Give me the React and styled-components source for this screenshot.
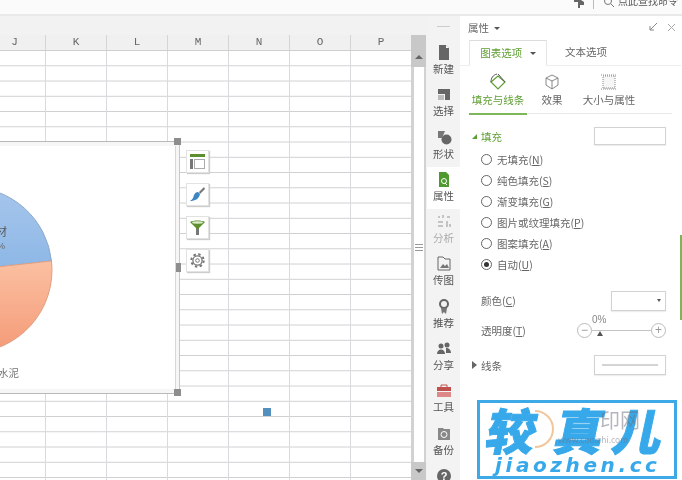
import React from "react";
import styled, { createGlobalStyle } from "styled-components";

const Global = createGlobalStyle`
  html, body { margin: 0; padding: 0; background: #fff; overflow: hidden; }
  #root { width: 682px; height: 480px; }
`;
const FONT = `"Noto Sans CJK SC", "Liberation Sans", sans-serif`;

const Page = styled.div`
  position: relative; width: 682px; height: 480px; overflow: hidden;
  display: flex; flex-direction: column; background: #fff;
  font-family: ${FONT}; color: #666; filter: blur(0.55px);
`;
const TopBar = styled.div`
  height: 14px; flex: none; background: #fbfbfb; border-bottom: 2px solid #e9e9e9;
  display: flex; justify-content: flex-end; align-items: flex-start; gap: 4px;
  padding-right: 4px; overflow: hidden; box-sizing: content-box;
`;
const Sep = styled.span`width: 1px; height: 9px; background: #bbb; margin: 0 5px 0 4px;`;
const TopIcon = styled.span`display: block; transform: translateY(-3px); height: 11px; svg { display: block; }`;
const TopText = styled.span`font-size: 10px; line-height: 12px; color: #555; white-space: nowrap; transform: translateY(-5px);`;
const Body = styled.div`flex: 1; display: flex; min-height: 0;`;

const Work = styled.div`
  width: 427px; flex: none; background: #f2f2f2; display: flex; flex-direction: column; padding-top: 19px;
`;
const SheetRow = styled.div`flex: 1; display: flex; min-height: 0;`;
const Sheet = styled.div`width: 411px; flex: none; display: flex; flex-direction: column; position: relative; background: #fff;`;
const Header = styled.div`
  height: 15px; flex: none; background: #f0f0f0; border-bottom: 1px solid #cfcfcf;
  display: flex; box-sizing: content-box;
`;
const ColHead = styled.div`
  width: ${p => p.$w}px; flex: none; box-sizing: border-box; border-right: 1px solid #d5d5d8; padding-right: ${p => p.$pr || 0}px;
  text-align: center; font: 11px/15px "Liberation Mono", "DejaVu Sans Mono", monospace; color: #666;
`;
const Cells = styled.div`
  flex: 1; background-color: #fff;
  background-image:
    linear-gradient(to right, transparent 60px, #d9d9de 60px, #d9d9de 61px),
    linear-gradient(to bottom, transparent 14.25px, #cfcfcf 14.25px, #cfcfcf 15.25px);
  background-size: 61px 100%, 100% 15.25px;
  background-position: -15px 0, 0 0;
`;
const Scroll = styled.div`
  width: 15px; flex: none; background: #d2d2d2; display: flex; flex-direction: column; align-items: stretch; position: relative;
`;
const ScrollEnd = styled.div`
  height: ${p => p.$h}px; flex: none; background: #c8c8c8; display: flex; flex-direction: column; align-items: center; justify-content: center;
`;
const Track = styled.div`flex: 1; background: #fff; margin: 0 2px 0 3px;`;
const Grip = styled.span`
  position: absolute; left: 4px; top: 209px; width: 8px; height: 7px;
  border-top: 1px solid #999; border-bottom: 1px solid #999; box-sizing: border-box;
  &::after { content: ""; display: block; height: 1px; background: #999; margin-top: 2px; }
`;
const UpArrow = styled.span`width: 0; height: 0; border: 4px solid transparent; border-bottom: 4px solid #666; border-top: 0; margin-top: 12px;`;
const DownArrow = styled.span`width: 0; height: 0; border: 4px solid transparent; border-top: 4px solid #666; border-bottom: 0;`;

const Frame = styled.div`
  position: absolute; left: -6px; top: 106px; width: 186px; height: 253px; box-sizing: border-box;
  background: #f6f6f6; border-style: solid; border-color: #b8b8b8 #c8c8cc #b8b8b8 transparent; border-width: 1px 1px 1px 0;
`;
const ChartArea = styled.div`
  position: absolute; left: 0; top: 4px; width: 181px; height: 243px; background: #fff; border-right: 1px solid #d8d8dc;
  svg { display: block; }
`;
const Handle = styled.span`
  position: absolute; left: 174px; top: ${p => p.$t}px; width: ${p => p.$narrow ? 5 : 7}px; height: ${p => p.$narrow ? 9 : 7}px;
  margin-left: ${p => p.$narrow ? 2 : 0}px; background: #8d8d8d;
`;
const Tools = styled.div`position: absolute; left: 186px; top: 115px; display: flex; flex-direction: column; gap: 10px;`;
const ToolBtn = styled.div`
  width: 23px; height: 23px; box-sizing: border-box; background: #fff; border: 1px solid #e2e2e2;
  box-shadow: 1px 1px 1px #ccc; display: flex; align-items: center; justify-content: center;
`;
const Marker = styled.span`position: absolute; left: 263px; top: 373px; width: 8px; height: 8px; background: #5390bd;`;

const Rail = styled.div`
  width: 33px; flex: none; background: #f3f3f3; display: flex; flex-direction: column; align-items: center; padding-top: 24px;
  position: relative;
`;
const RailGrip = styled.span`position: absolute; top: 10px; left: 10px; width: 13px; height: 1px; background: #ccc;`;
const RailItem = styled.div`
  width: 100%; height: 42.3px; flex: none; display: flex; flex-direction: column; align-items: center; justify-content: flex-start;
  background: ${p => p.$active ? "#fff" : "transparent"}; color: ${p => p.$dim ? "#aaa" : "#555"};
  font-size: 10.5px; line-height: 13px; padding-top: 4px; box-sizing: border-box; gap: 1px;
  svg { display: block; height: 17px; }
`;

const Panel = styled.div`width: 222px; flex: none; background: #fff; position: relative; display: flex; flex-direction: column; padding-top: 2px; box-sizing: border-box; border-right: 1px solid #fff;`;
const GreenEdge = styled.span`position: absolute; right: -1px; top: 219px; height: 85px; width: 2px; background: #7cb45a;`;
const PanelHead = styled.div`
  height: 18px; display: flex; align-items: center; justify-content: space-between; padding: 0 5px 0 8px; font-size: 10.5px; flex: none;
`;
const Caret = styled.i`display: inline-block; border: 3px solid transparent; border-top: 3px solid #555; border-bottom: 0; margin-left: 5px; vertical-align: 2px;`;
const HeadIcons = styled.div`display: flex; gap: 9px; align-items: center;`;
const Tabs = styled.div`height: 25px; flex: none; display: flex; padding-left: 9px; border-bottom: 1px solid #eee; margin-top: 4px; box-sizing: content-box;`;
const Tab = styled.div`
  width: ${p => p.$w}px; box-sizing: border-box; text-align: center; font-size: 10.5px; line-height: 24px;
  color: ${p => p.$active ? "#5d9e32" : "#666"};
  ${p => p.$active ? "border: 1px solid #e6e6e6; border-bottom: 1px solid #fff; height: 26px; border-top-color: #dcdcdc;" : ""}
`;
const SubTabs = styled.div`display: flex; height: 47px; flex: none; margin: 0 9px; border-bottom: 1px solid #e8e8e8; box-sizing: content-box;`;
const SubTab = styled.div`
  width: ${p => p.$w}px; flex: none; display: flex; flex-direction: column; align-items: center; padding-top: 6px; gap: 1px;
  font-size: 10.5px; line-height: 14px; color: ${p => p.$active ? "#5d9e32" : "#666"}; box-sizing: border-box; height: 49px;
  ${p => p.$active ? "border-bottom: 2px solid #7fb55c;" : ""}
  svg { display: block; height: 20px; }
`;
const Rows = styled.div`display: flex; flex-direction: column; padding: 0 15px 0 12px; flex: 1;`;
const SectionRow = styled.div`
  display: flex; align-items: center; justify-content: space-between; height: ${p => p.$h}px; margin-top: ${p => p.$mt || 0}px; flex: none;
`;
const SectionLabel = styled.div`display: flex; align-items: center; font-size: 10.5px; color: ${p => p.$green ? "#5d9e32" : "#666"}; gap: 4px;`;
const TriDown = styled.i`width: 0; height: 0; border-left: 5px solid transparent; border-bottom: 5px solid #5d9e32;`;
const TriRight = styled.i`width: 0; height: 0; border: 4px solid transparent; border-left: 5px solid #666; border-right: 0;`;
const BoxField = styled.div`
  width: ${p => p.$w}px; height: ${p => p.$h}px; box-sizing: border-box; border: 1px solid #d2d2d2; box-shadow: 0 1px 1px #eee;
  display: flex; align-items: center; justify-content: ${p => p.$end ? "flex-end" : "center"}; padding: 0 4px; background: #fff;
`;
const LineSample = styled.span`height: 2px; flex: 1; margin: 0 3px; background: #d4d4d4;`;
const MiniCaret = styled.i`border: 2px solid transparent; border-top: 3px solid #555; border-bottom: 0;`;
const RadioRow = styled.div`display: flex; align-items: center; height: 21px; padding-left: 9px; gap: 5px; font-size: 10.5px; color: #666; flex: none;`;
const RadioDot = styled.span`
  width: 11px; height: 11px; box-sizing: border-box; border: 1px solid #666; border-radius: 50%; flex: none; display: flex; align-items: center; justify-content: center;
  &::after { content: ""; width: 5px; height: 5px; border-radius: 50%; background: ${p => p.$on ? "#333" : "transparent"}; }
`;
const U = styled.span`text-decoration: underline;`;
const Spacer = styled.div`height: 4px; flex: none;`;
const FormLabel = styled.div`font-size: 10.5px; color: #666; padding-left: 9px;`;
const Slider = styled.div`position: relative; width: 89px; height: 16px; display: flex; align-items: center; justify-content: space-between;`;
const RoundBtn = styled.span`
  width: 15px; height: 15px; box-sizing: border-box; border: 1px solid #bbb; border-radius: 50%; color: #999; background: #fff; z-index: 1;
  display: flex; align-items: center; justify-content: center; font: 12px/12px "Liberation Sans", sans-serif;
`;
const SliderLine = styled.span`position: absolute; left: 14px; right: 14px; top: 8px; height: 1px; background: #c4c4c4;`;
const SliderVal = styled.span`position: absolute; left: 15px; top: -8px; font-size: 10px; line-height: 12px; color: #888; font-family: "Liberation Sans", sans-serif; background: #fff;`;
const SliderThumb = styled.span`position: absolute; left: 20px; top: 9px; border: 3px solid transparent; border-bottom: 5px solid #555; border-top: 0;`;

const Logo = styled.div`
  position: absolute; left: 477px; top: 400px; width: 200px; height: 79px; box-sizing: border-box;
  border: 3px solid #3da9e6; background: rgba(255,255,255,.96); overflow: hidden;
  display: flex; flex-direction: column; align-items: flex-start;
  svg { position: absolute; left: 0; top: 0; }
`;
const LogoCn = styled.div`
  position: relative; font: 900 49px/50px "Noto Sans CJK SC", sans-serif; color: #37a9ea; letter-spacing: 19px; white-space: nowrap;
  transform: skewX(-12deg); -webkit-text-stroke: 1px #37a9ea; margin-top: 1px; margin-left: 8px;
`;
const LogoLast = styled.span`margin-left: -9px;`;
const LogoEn = styled.div`
  position: relative; font: italic 700 20px/20px "DejaVu Sans", sans-serif; color: #37a9ea; letter-spacing: 3.6px; white-space: nowrap; margin-top: 1px; margin-left: 15px;
`;
const Faint = styled.span`position: absolute; left: ${p => p.$l}px; top: ${p => p.$t}px; font-size: ${p => p.$s}px; line-height: 1; color: rgba(110,110,125,.5); white-space: nowrap;`;

const Doc = ({ c = "#666" }) => <svg width="16" height="17" viewBox="0 0 16 17"><path d="M3 1h7l3 3v12H3z" fill={c} /><path d="M10 1v3h3" fill="#fff" /></svg>;
const icons = {
  select: <svg width="16" height="17" viewBox="0 0 16 17"><path d="M2 3h12v11H9V8H2z" fill="#666" /><path d="M2 9h6v5H2z" fill="#bbb" /></svg>,
  shape: <svg width="16" height="17" viewBox="0 0 16 17"><path d="M2 2h7l-3 7H2z" fill="#777" /><circle cx="10.5" cy="10.5" r="5" fill="#666" /></svg>,
  attr: <svg width="16" height="17" viewBox="0 0 16 17"><path d="M3 1h7l3 3v12H3z" fill="#4f9a2e" /><circle cx="8" cy="10" r="2.5" fill="none" stroke="#fff" /><path d="M9 12l2 2" stroke="#fff" /></svg>,
  chart: <svg width="16" height="17" viewBox="0 0 16 17" fill="#c4c4c4"><path d="M2 3h2v2H2zM6 2h2v3H6zM11 3h3v2h-3zM2 8h5v2H2zM10 8h2v6h-2zM2 12h5v2H2zM13 11h2v3h-2z" /></svg>,
  pic: <svg width="16" height="17" viewBox="0 0 16 17"><path d="M2 2h5l2 2h5v11H2z" fill="none" stroke="#666" /><path d="M4 13l3-4 2 2 2-2 2 4z" fill="#777" /></svg>,
  award: <svg width="16" height="17" viewBox="0 0 16 17"><circle cx="8" cy="6" r="4" fill="none" stroke="#666" strokeWidth="2" /><path d="M5 10l1 6 2-2 2 2 1-6z" fill="#777" /></svg>,
  share: <svg width="16" height="17" viewBox="0 0 16 17" fill="#666"><circle cx="5" cy="6" r="2.5" /><circle cx="11" cy="5" r="2.5" /><path d="M1 14c0-6 8-6 8 0zM10 8c3 0 5 2 5 5h-5z" /></svg>,
  tool: <svg width="16" height="17" viewBox="0 0 16 17"><path d="M5 3h6v3H5z" fill="none" stroke="#c0504d" /><path d="M1 5h14v4H1z" fill="#c0504d" /><path d="M1 10h14v5H1z" fill="#d88" /></svg>,
  backup: <svg width="16" height="17" viewBox="0 0 16 17"><path d="M2 3h5l1 1h6v11H2z" fill="#888" /><circle cx="8" cy="9.5" r="3" fill="none" stroke="#fff" /></svg>,
  help: <svg width="16" height="17" viewBox="0 0 16 17"><circle cx="8" cy="9" r="7" fill="#666" /><text x="8" y="13" textAnchor="middle" fontSize="11" fontWeight="700" fill="#fff" fontFamily="Liberation Sans">?</text></svg>,
};
const railItems = [
  ["新建", <Doc />], ["选择", icons.select], ["形状", icons.shape], ["属性", icons.attr, "active"], ["分析", icons.chart, "dim"],
  ["传图", icons.pic], ["推荐", icons.award], ["分享", icons.share], ["工具", icons.tool], ["备份", icons.backup], ["", icons.help],
];
const radios = [["无填充(", "N"], ["纯色填充(", "S"], ["渐变填充(", "G"], ["图片或纹理填充(", "P"], ["图案填充(", "A"], ["自动(", "U", true]];

function Pie() {
  return (
    <svg width="181" height="243" viewBox="0 0 181 243">
      <defs>
        <linearGradient id="b" x1="0" y1="0" x2="0" y2="1"><stop offset="0" stopColor="#a6c6ec" /><stop offset="1" stopColor="#8db7e6" /></linearGradient>
        <linearGradient id="o" x1="0" y1="0" x2="0" y2="1"><stop offset="0" stopColor="#fbc0a2" /><stop offset="1" stopColor="#f49a77" /></linearGradient>
      </defs>
      <g transform="translate(6,-146)">
        <path d="M-31 270 L51.5 261 A83 83 0 0 0 -31 187Z" fill="url(#b)" stroke="#8ea9c9" />
        <path d="M-31 270 L51.5 261 A83 83 0 0 1 -31 353Z" fill="url(#o)" stroke="#e0a080" />
        <text x="-4" y="236" fontSize="11" fill="#555" fontFamily="Noto Sans CJK SC">材</text>
        <text x="-3" y="249" fontSize="9" fill="#666" fontFamily="Liberation Sans">%</text>
        <text x="-2" y="377" fontSize="10.5" fill="#777" fontFamily="Noto Sans CJK SC">水泥</text>
      </g>
    </svg>
  );
}

export default function App() {
  return (
    <Page>
      <Global />
      <TopBar>
        <TopIcon><svg width="12" height="11" viewBox="0 0 12 11"><path d="M1 0h7v3l3 2v3H7v3H5V5H1z" fill="#666" /></svg></TopIcon>
        <Sep />
        <TopIcon><svg width="11" height="11" viewBox="0 0 11 11"><circle cx="5" cy="4" r="3.5" fill="none" stroke="#777" /><path d="M8 7l3 3" stroke="#777" /></svg></TopIcon>
        <TopText>点此查找命令</TopText>
      </TopBar>
      <Body>
        <Work>
          <SheetRow>
            <Sheet>
              <Header>
                <ColHead $w={46} $pr={16}>J</ColHead>
                {["K", "L", "M", "N", "O", "P"].map(c => <ColHead key={c} $w={61}>{c}</ColHead>)}
              </Header>
              <Cells />
              <Frame>
                <ChartArea><Pie /></ChartArea>
              </Frame>
              <Handle $t={103} />
              <Handle $t={228} $narrow />
              <Handle $t={354} />
              <Tools>
                <ToolBtn>
                  <svg width="17" height="17" viewBox="0 0 17 17"><rect x="1" y="1" width="15" height="3" fill="#5d8f2f" /><rect x="1" y="6" width="3" height="10" fill="#777" /><rect x="5.5" y="6.5" width="10" height="9" fill="#fff" stroke="#aaa" /></svg>
                </ToolBtn>
                <ToolBtn>
                  <svg width="17" height="17" viewBox="0 0 17 17"><path d="M10 6l5-5 1 2-5 5z" fill="#777" /><path d="M9 6l2 2c-1 5-5 7-10 7 3-2 3-3 4-6 1-2 2-3 4-3z" fill="#3d86c6" /></svg>
                </ToolBtn>
                <ToolBtn>
                  <svg width="17" height="17" viewBox="0 0 17 17"><path d="M1 3c3-2 12-2 15 0L10 9v7H7V9z" fill="#5d8f2f" /><ellipse cx="8.5" cy="3.5" rx="5.5" ry="1.2" fill="#dcebc8" /><rect x="7" y="10" width="3" height="6" fill="#777" /></svg>
                </ToolBtn>
                <ToolBtn>
                  <svg width="17" height="17" viewBox="0 0 17 17"><circle cx="8.5" cy="8.5" r="4.6" fill="none" stroke="#777" strokeWidth="1.3" /><circle cx="8.5" cy="8.5" r="6.2" fill="none" stroke="#777" strokeWidth="2" strokeDasharray="2.4 2.47" /><circle cx="8.5" cy="8.5" r="1.8" fill="none" stroke="#777" /></svg>
                </ToolBtn>
              </Tools>
              <Marker />
            </Sheet>
            <Scroll>
              <ScrollEnd $h={32}><UpArrow /></ScrollEnd>
              <Track />
              <ScrollEnd $h={18}><DownArrow /></ScrollEnd>
              <Grip />
            </Scroll>
          </SheetRow>
        </Work>
        <Rail>
          <RailGrip />
          {railItems.map(([t, ic, s]) => (
            <RailItem key={t || "help"} $active={s === "active"} $dim={s === "dim"}>
              {ic}{t && <span>{t}</span>}
            </RailItem>
          ))}
        </Rail>
        <Panel>
          <GreenEdge />
          <PanelHead>
            <span>属性<Caret /></span>
            <HeadIcons>
              <svg width="10" height="10" viewBox="0 0 10 10"><path d="M9 1L2 8M2 4v4h4" fill="none" stroke="#888" /></svg>
              <svg width="9" height="9" viewBox="0 0 9 9"><path d="M1 1l7 7M8 1L1 8" stroke="#aaa" /></svg>
            </HeadIcons>
          </PanelHead>
          <Tabs>
            <Tab $active $w={78}>图表选项 <Caret /></Tab>
            <Tab $w={78}>文本选项</Tab>
          </Tabs>
          <SubTabs>
            <SubTab $active $w={58}>
              <svg width="22" height="20" viewBox="0 0 22 20"><path d="M4 10l7-6 7 6-7 7z" fill="#fff" stroke="#5d9e32" strokeWidth="1.2" /><path d="M4 10c0-4 2-7 6-8" fill="none" stroke="#555" /><path d="M11 2l7 8" fill="none" stroke="#555" /></svg>
              填充与线条
            </SubTab>
            <SubTab $w={50}>
              <svg width="18" height="20" viewBox="0 0 18 20"><path d="M9 3l6 3v7l-6 4-6-4V6zM3 6l6 3 6-3M9 9v8" fill="none" stroke="#888" /></svg>
              效果
            </SubTab>
            <SubTab $w={64}>
              <svg width="18" height="20" viewBox="0 0 18 20"><rect x="3" y="4" width="12" height="12" fill="#f6f6f6" stroke="#888" strokeDasharray="1 1" /><path d="M1 3h16M1 17h16" stroke="#888" strokeDasharray="1 1" /></svg>
              大小与属性
            </SubTab>
          </SubTabs>
          <Rows>
            <SectionRow $h={18} $mt={13}>
              <SectionLabel $green><TriDown />填充</SectionLabel>
              <BoxField $w={72} $h={18} />
            </SectionRow>
            <Spacer />
            {radios.map(([a, k, on]) => (
              <RadioRow key={k}><RadioDot $on={on} /><span>{a}<U>{k}</U>)</span></RadioRow>
            ))}
            <SectionRow $h={21} $mt={15}>
              <FormLabel>颜色(<U>C</U>)</FormLabel>
              <BoxField $w={55} $h={20} $end><MiniCaret /></BoxField>
            </SectionRow>
            <SectionRow $h={16} $mt={11}>
              <FormLabel>透明度(<U>T</U>)</FormLabel>
              <Slider>
                <SliderLine />
                <SliderVal>0%</SliderVal>
                <RoundBtn>−</RoundBtn>
                <SliderThumb />
                <RoundBtn>+</RoundBtn>
              </Slider>
            </SectionRow>
            <SectionRow $h={20} $mt={17}>
              <SectionLabel><TriRight />线条</SectionLabel>
              <BoxField $w={72} $h={20}><LineSample /></BoxField>
            </SectionRow>
          </Rows>
        </Panel>
      </Body>
      <Logo>
        <svg width="194" height="73" viewBox="0 0 194 73"><path d="M55 8a17 17 0 0 1 0 36" fill="none" stroke="#f3c69a" strokeWidth="2" /></svg>
        <LogoCn>较真<LogoLast>儿</LogoLast></LogoCn>
        <LogoEn>jiaozhen.cc</LogoEn>
        <Faint $l={120} $t={7} $s={20}>印网</Faint>
        <Faint $l={78} $t={32} $s={8.5}>www.cooizhi.com</Faint>
      </Logo>
    </Page>
  );
}
